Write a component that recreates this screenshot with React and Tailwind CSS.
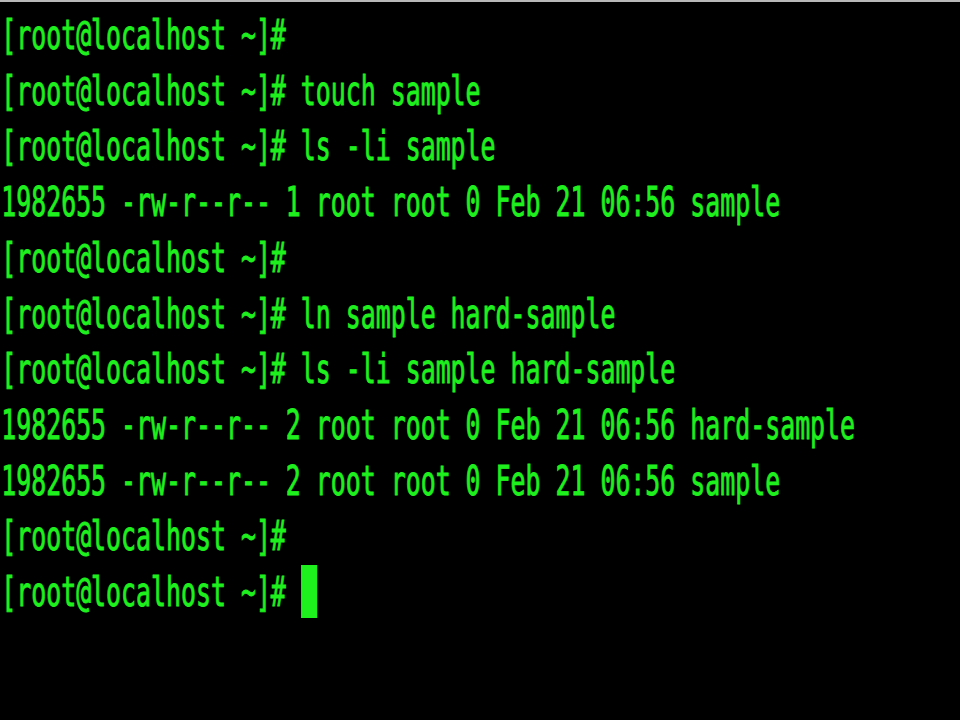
export default function App() {
  const lines = [
    "[root@localhost ~]#",
    "[root@localhost ~]# touch sample",
    "[root@localhost ~]# ls -li sample",
    "1982655 -rw-r--r-- 1 root root 0 Feb 21 06:56 sample",
    "[root@localhost ~]#",
    "[root@localhost ~]# ln sample hard-sample",
    "[root@localhost ~]# ls -li sample hard-sample",
    "1982655 -rw-r--r-- 2 root root 0 Feb 21 06:56 hard-sample",
    "1982655 -rw-r--r-- 2 root root 0 Feb 21 06:56 sample",
    "[root@localhost ~]#",
  ];
  return (
    <div className="w-[960px] h-[720px] bg-black overflow-hidden flex flex-col">
      <div className="h-[2px] bg-[#b8b8b8] shrink-0" />
      <div
        className="pt-[6px] pl-[2px] text-[#1ef01e] text-[40px] leading-[55.7px] whitespace-pre origin-left scale-x-[0.622] [-webkit-text-stroke:0.9px_#1ef01e]"
        style={{ fontFamily: '"DejaVu Sans Mono", monospace' }}
      >
        {lines.map((l, i) => (
          <div key={i}>{l}</div>
        ))}
        <div className="flex items-center">
          <span>{"[root@localhost ~]# "}</span>
          <span className="inline-block w-[26px] h-[53px] -mt-[2px] bg-[#1ef01e]" />
        </div>
      </div>
    </div>
  );
}
